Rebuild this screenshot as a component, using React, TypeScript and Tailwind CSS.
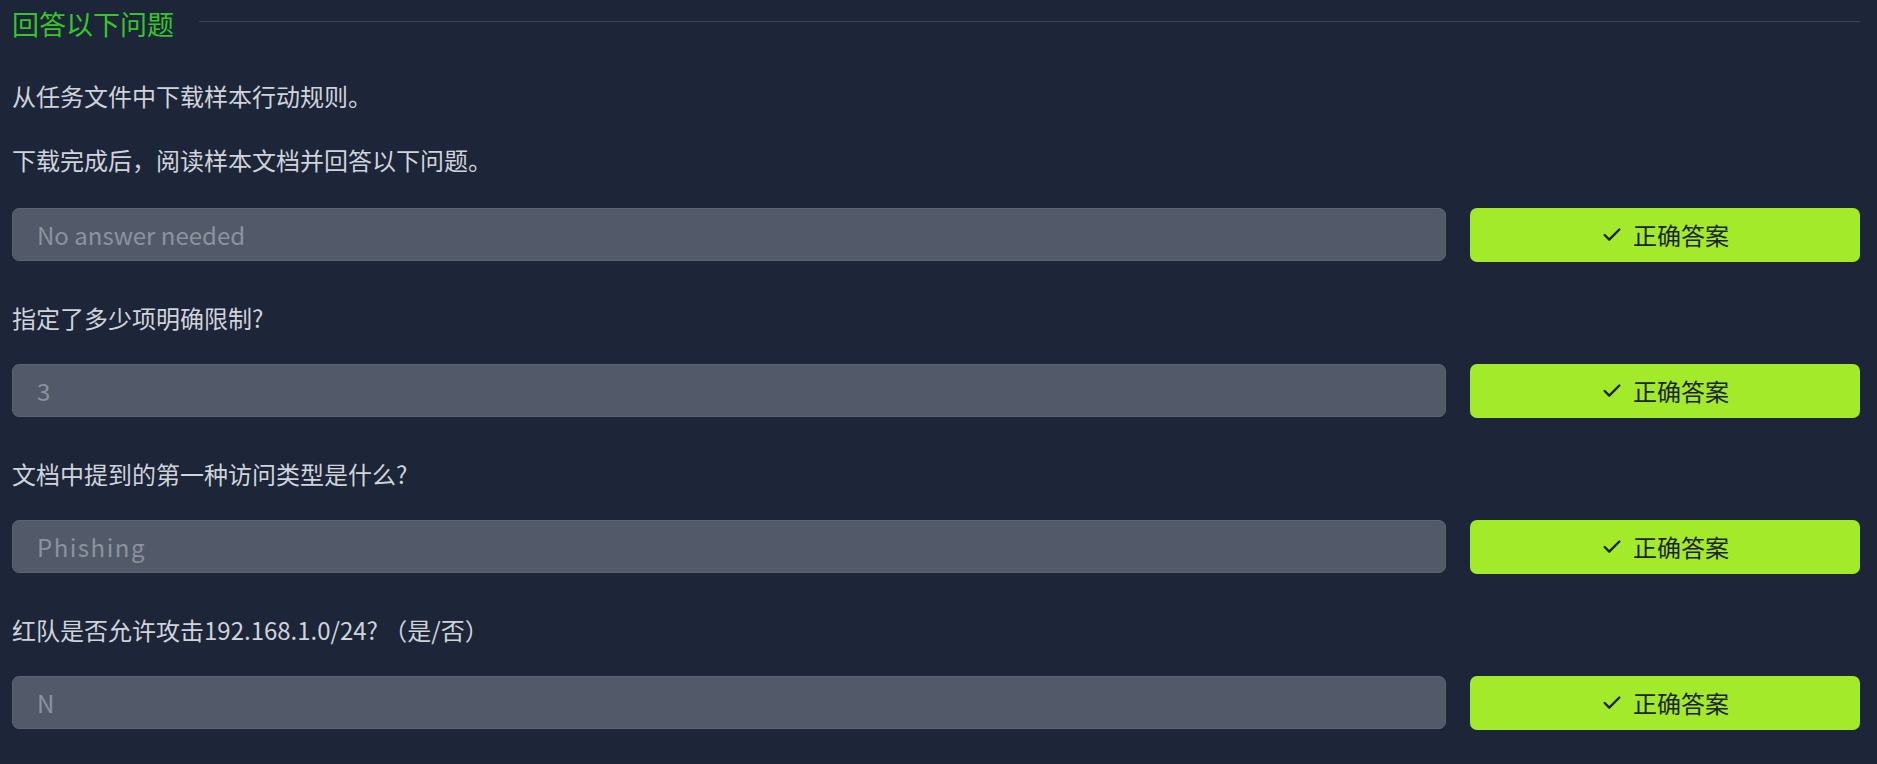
import { Check } from "lucide-react";

interface Question {
  text: string;
  answer: string;
  wide?: boolean;
}

const questions: Question[] = [
  { text: "指定了多少项明确限制?", answer: "3" },
  { text: "文档中提到的第一种访问类型是什么?", answer: "Phishing", wide: true },
  { text: "红队是否允许攻击192.168.1.0/24? （是/否）", answer: "N" },
];

function AnswerRow({ answer, wide }: { answer: string; wide?: boolean }) {
  return (
    <div className="flex items-start gap-[24px]">
      <div className="flex h-[53px] flex-1 items-center rounded-[7px] border border-[#5b6373] bg-[#525a6a] px-[24px]">
        <span className={"text-[24px] text-[#8c929e] " + (wide ? "tracking-[1.5px]" : "")}>{answer}</span>
      </div>
      <button className="flex h-[54px] w-[390px] shrink-0 items-center justify-center gap-[10px] rounded-[7px] bg-[#a3ea2a] text-[24px] text-[#1c2333]">
        <Check size={22} strokeWidth={2.6} />
        <span>正确答案</span>
      </button>
    </div>
  );
}

export default function App() {
  return (
    <div
      className="min-h-[764px] w-full bg-[#1d2539] pl-[12px] pr-[17px] pt-[4px]"
      style={{ fontFamily: '"Noto Sans CJK SC", "Noto Sans", sans-serif' }}
    >
      <div className="flex h-[40px] items-center">
        <h2 className="text-[27px] leading-[40px] font-normal text-[#37c42a]">回答以下问题</h2>
        <div className="ml-[25px] mt-[-5px] h-px flex-1 bg-[#3a4356]" />
      </div>

      <p className="mt-[34px] text-[24px] leading-[36px] text-[#cfd3da]">从任务文件中下载样本行动规则。</p>
      <p className="mt-[28px] text-[24px] leading-[36px] text-[#cfd3da]">下载完成后，阅读样本文档并回答以下问题。</p>

      <div className="mt-[30px]">
        <AnswerRow answer="No answer needed" />
      </div>

      {questions.map((q) => (
        <div key={q.text}>
          <p className="mt-[38px] text-[24px] leading-[36px] text-[#cfd3da]">{q.text}</p>
          <div className="mt-[28px]">
            <AnswerRow answer={q.answer} wide={q.wide} />
          </div>
        </div>
      ))}
    </div>
  );
}
